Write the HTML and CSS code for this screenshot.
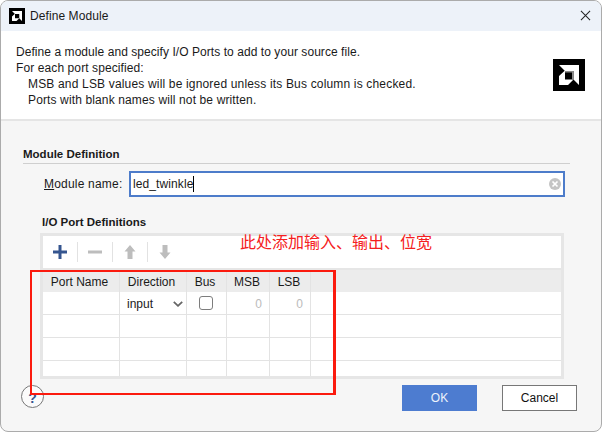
FILE: index.html
```html
<!DOCTYPE html>
<html lang="en">
<head>
<meta charset="utf-8">
<title>Define Module</title>
<link rel="stylesheet" href="styles.css">
</head>
<body>
<div class="dialog">
  <div class="titlebar">
    <svg class="title-logo" viewBox="0 0 32 32"><rect width="32" height="32" fill="#000"/><path d="M6 6h20v20l-5.500-5.500V12H12z" fill="#fff"/><path d="M6 17l6-5.500v9h8.500L15 26H6z" fill="#fff"/></svg>
    <span class="title-text">Define Module</span>
    <svg class="close" viewBox="0 0 12 12"><path d="M1 1l10 10M11 1L1 11" stroke="#222" stroke-width="1.100" fill="none"/></svg>
  </div>
  <div class="header">
    <div class="desc">
      <div class="l1">Define a module and specify I/O Ports to add to your source file.</div>
      <div class="l2">For each port specified:</div>
      <div class="indent l3">MSB and LSB values will be ignored unless its Bus column is checked.</div>
      <div class="indent l4">Ports with blank names will not be written.</div>
    </div>
    <svg class="logo" viewBox="0 0 32 32"><rect width="32" height="32" fill="#000"/><path d="M6 6h20v20l-5.500-5.500V12H12z" fill="#fff"/><path d="M6 17l6-5.500v9h8.500L15 26H6z" fill="#fff"/><path d="M12 12h8.500v8.500h-1.500V13.500H12z" fill="#8c8c8c"/></svg>
  </div>
  <div class="body">
    <div class="section-title">Module Definition</div>
    <div class="name-row">
      <label class="name-label"><u>M</u>odule name:</label>
      <div class="input">
        <span class="input-text">led_twinkle</span><span class="caret"></span>
        <svg class="clear" viewBox="0 0 12 12"><circle cx="6" cy="6" r="6" fill="#c4c4c4"/><path d="M3.500 3.500l5 5M8.500 3.500l-5 5" stroke="#fff" stroke-width="1.700"/></svg>
      </div>
    </div>
    <div class="ports-title">I/O Port Definitions</div>
    <div class="panel">
      <div class="toolbar">
        <svg class="tool" viewBox="0 0 14 14"><path d="M0 7h14M7 0v14" stroke="#35558f" stroke-width="3" fill="none"/></svg>
        <span class="tool-sep"></span>
        <svg class="tool" viewBox="0 0 14 14"><path d="M0 7h14" stroke="#bdbdbd" stroke-width="3" fill="none"/></svg>
        <span class="tool-sep"></span>
        <svg class="tool" viewBox="0 0 14 14"><path d="M7 0l5.500 6.500H9.500V14h-5V6.500H1.500z" fill="#bdbdbd"/></svg>
        <span class="tool-sep"></span>
        <svg class="tool" viewBox="0 0 14 14"><path d="M7 14l5.500-6.500H9.500V0h-5v7.500H1.500z" fill="#bdbdbd"/></svg>
      </div>
      <div class="grid">
        <div class="row head">
          <div class="c c1">Port Name</div><div class="c c2">Direction</div><div class="c c3">Bus</div><div class="c c4">MSB</div><div class="c c5">LSB</div><div class="c c6"></div>
        </div>
        <div class="row">
          <div class="c c1"></div>
          <div class="c c2 dir">input<svg class="chev" viewBox="0 0 10 6"><path d="M.800.800L5 4.800 9.200.800" stroke="#666" stroke-width="1.800" fill="none"/></svg></div>
          <div class="c c3"><span class="check"></span></div>
          <div class="c c4 zero">0</div><div class="c c5 zero">0</div><div class="c c6"></div>
        </div>
        <div class="row"><div class="c c1"></div><div class="c c2"></div><div class="c c3"></div><div class="c c4"></div><div class="c c5"></div><div class="c c6"></div></div>
        <div class="row"><div class="c c1"></div><div class="c c2"></div><div class="c c3"></div><div class="c c4"></div><div class="c c5"></div><div class="c c6"></div></div>
        <div class="row last"><div class="c c1"></div><div class="c c2"></div><div class="c c3"></div><div class="c c4"></div><div class="c c5"></div><div class="c c6"></div></div>
      </div>
    </div>
    <div class="footer">
      <div class="help">?</div>
      <div class="buttons">
        <button class="btn ok">OK</button>
        <button class="btn cancel">Cancel</button>
      </div>
    </div>
  </div>
  <div class="note">此处添加输入、输出、位宽</div>
  <div class="redbox"></div>
</div>
</body>
</html>
```

FILE: styles.css
```css
* { box-sizing: border-box; }
html, body { margin: 0; padding: 0; background: #fff; }
body { width: 602px; height: 432px; overflow: hidden; font-family: "Liberation Sans", Arial, sans-serif; font-size: 12px; color: #1a1a1a; }
.dialog { position: relative; width: 602px; height: 432px; display: flex; flex-direction: column; border: 1px solid #ababab; border-radius: 8px; overflow: hidden; background: #f6f6f6; }
.titlebar { height: 30px; flex: none; background: #edf2f9; display: flex; align-items: center; padding: 0 8px; }
.title-logo { width: 16px; height: 16px; flex: none; }
.title-text { margin-left: 5px; font-size: 12px; letter-spacing: .08px; }
.close { width: 11px; height: 11px; margin-left: auto; margin-right: 2px; margin-top: -2px; }
.header { height: 88px; flex: none; background: #fff; display: flex; padding: 13px 16px 0 15px; justify-content: space-between; }
.desc { line-height: 16px; }
.l1 { letter-spacing: .06px; }
.l2 { letter-spacing: .1px; }
.l3 { letter-spacing: .17px; }
.l4 { letter-spacing: .13px; }
.indent { padding-left: 12px; }
.logo { width: 32px; height: 32px; margin-top: 15px; flex: none; }
.body { flex: 1; border-top: 2px solid #e5e5e5; padding: 24px 31px 0 22px; display: flex; flex-direction: column; }
.section-title { font-weight: bold; font-size: 11.500px; height: 19px; line-height: 19px; border-bottom: 1px solid #cfcfcf; width: 547px; }
.name-row { display: flex; align-items: center; margin-top: 7px; height: 26px; width: 542px; padding-left: 21px; }
.name-label { width: 85px; flex: none; letter-spacing: .2px; }
.input { flex: 1; height: 26px; background: #fff; border: 2px solid #4d7cca; display: flex; align-items: center; padding: 0 2px; }
.input-text { letter-spacing: .1px; }
.caret { width: 1px; height: 16px; background: #000; }
.clear { width: 12px; height: 12px; margin-left: auto; }
.ports-title { font-weight: bold; font-size: 11.500px; margin: 18px 0 0 19px; line-height: 15px; height: 18px; }
.panel { margin-left: 17px; width: 524px; height: 146px; background: #fff; border: 3px solid #e6e6e6; display: flex; flex-direction: column; }
.toolbar { height: 32px; flex: none; display: flex; align-items: center; padding-left: 10px; }
.tool { width: 14px; height: 14px; flex: none; }
.tool-sep { width: 1px; height: 20px; background: #e2e2e2; margin: 0 10px; }
.grid { flex: 1; border-top: 2px solid #e6e6e6; display: flex; flex-direction: column; }
.row { display: flex; height: 23px; border-bottom: 1px solid #e3e3e3; }
.row.head { height: 22px; background: #ececec; border-bottom: 0; }
.row.last { flex: 1; border-bottom: 0; height: auto; }
.c { border-right: 1px solid #e3e3e3; flex: none; display: flex; align-items: center; }
.head .c { justify-content: center; padding: 2px 3px 0 0; }
.head .c4, .head .c5 { padding-right: 2px; }
.c1 { width: 77px; }
.c2 { width: 67px; }
.c3 { width: 40px; }
.c4 { width: 43px; }
.c5 { width: 41px; }
.c6 { flex: 1; border-right: 0; }
.dir { padding: 1px 0 0 7px; }
.chev { width: 10px; height: 6px; margin-left: auto; margin-right: 3px; }
.c3 .check { width: 14px; height: 14px; border: 1px solid #7d7d7d; border-radius: 3px; background: #fff; margin-left: 12px; }
.zero { justify-content: flex-end; padding: 1px 7px 0 0; color: #bbb; }
.footer { display: flex; align-items: flex-start; justify-content: space-between; margin: 6px 0 0 -2px; height: 26px; width: 556px; }
.help { width: 23px; height: 23px; border: 1px solid #777; border-radius: 50%; background: #fbfbfb; color: #35558f; font-weight: bold; font-size: 14px; display: flex; align-items: center; justify-content: center; padding-top: 2px; }
.buttons { display: flex; gap: 25px; }
.btn { width: 75px; height: 26px; font: 12px "Liberation Sans", Arial, sans-serif; border: 1px solid #777; background: #fff; color: #111; padding: 0; }
.ok { background: #4d7cd0; border-color: #4d7cd0; color: #eef3fb; }
.note { position: absolute; left: 239px; top: 229px; color: #f52020; font: 16px/22px "Noto Sans CJK SC", sans-serif; }
.redbox { position: absolute; left: 29px; top: 269px; width: 306px; height: 125px; border: solid #fb1a0e; border-width: 2px 3px 2px 2px; }
```
